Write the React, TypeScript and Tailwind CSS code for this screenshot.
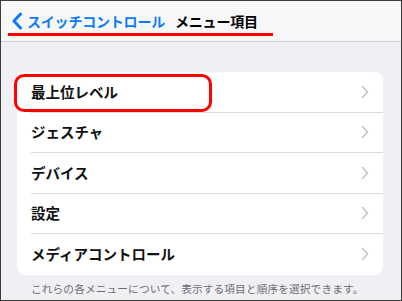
import React from "react";

const items = ["最上位レベル", "ジェスチャ", "デバイス", "設定", "メディアコントロール"];

function Chevron() {
  return (
    <svg className="h-[14px] w-[8px]" viewBox="0 0 8 14" fill="none" stroke="#c4c4c9" strokeWidth="1.6" strokeLinecap="round" strokeLinejoin="round">
      <path d="M1.5 1.5L6.5 7L1.5 12.5" />
    </svg>
  );
}

export default function App() {
  return (
    <div
      className="relative w-[402px] h-[301px] overflow-hidden border border-[#3c3c3c] bg-[#efeff4]"
      style={{ fontFamily: '"Noto Sans CJK JP", "Noto Sans", sans-serif' }}
    >
      {/* Nav bar */}
      <div className="h-[41px] bg-[#f7f7f8] border-b border-[#cfcfd3] flex items-center">
        <svg className="ml-[10px] h-[18px] w-[12px]" viewBox="0 0 12 18" fill="none" stroke="#0a7aff" strokeWidth="3" strokeLinecap="round" strokeLinejoin="round">
          <path d="M9.5 2L3 9L9.5 16" />
        </svg>
        <span className="ml-[4px] text-[14px] font-bold text-[#0a7aff] tracking-[-0.2px] leading-none">スイッチコントロール</span>
        <span className="ml-[10px] text-[14px] font-bold text-black tracking-[-0.2px] leading-none">メニュー項目</span>
      </div>

      {/* List */}
      <div className="pt-[30px] pl-[16px]">
        <div className="w-[366px] bg-white rounded-[8px] overflow-hidden">
          {items.map((label, i) => (
            <div key={label} className="pl-[14px]">
              <div
                className={
                  "h-[40.5px] flex items-center justify-between pr-[14px] " +
                  (i < items.length - 1 ? "border-b border-[#dcdce0]" : "")
                }
              >
                <span className="text-[14.5px] font-bold text-[#111] leading-none">{label}</span>
                <Chevron />
              </div>
            </div>
          ))}
        </div>
        <p className="mt-[9px] pl-[14px] text-[10.7px] text-[#6d6d72] leading-none tracking-[0.1px]">
          これらの各メニューについて、表示する項目と順序を選択できます。
        </p>
      </div>

      {/* Annotations */}
      <div className="absolute left-[7px] top-[32px] w-[265px] h-[3px] bg-[#ff0000]" />
      <div className="absolute left-[13px] top-[73px] w-[198px] h-[38px] border-[3px] border-[#ff0000] rounded-[10px]" />
    </div>
  );
}
